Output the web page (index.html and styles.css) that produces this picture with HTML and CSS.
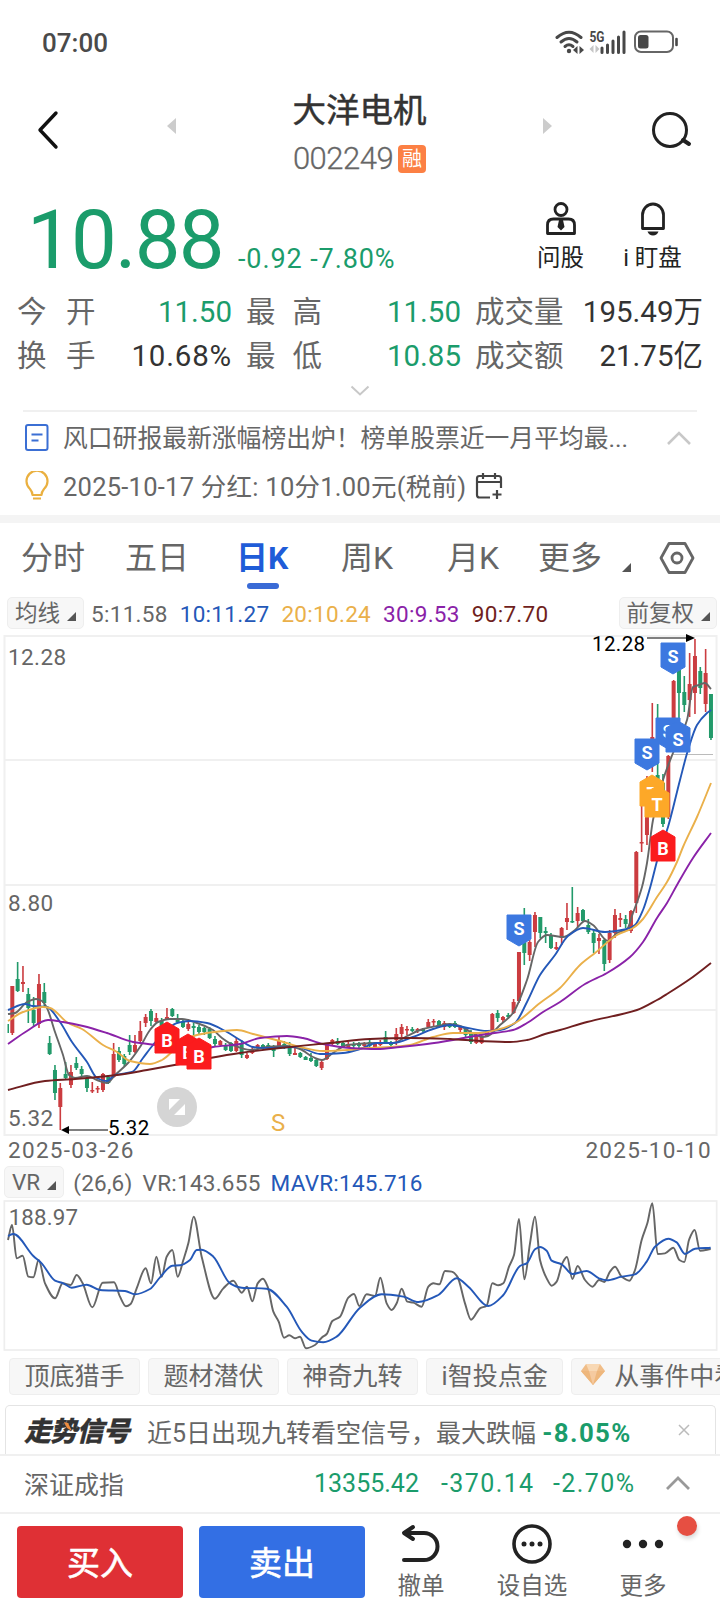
FILE: index.html
```html
<!DOCTYPE html>
<html lang="zh-CN">
<head>
    <meta charset="UTF-8">
    <meta name="viewport" content="width=device-width, initial-scale=1.0">
    <title>大洋电机 002249</title>
    <link rel="stylesheet" href="styles.css">
</head>
<body>
    <div class="status-bar">
        <span class="clock">07:00</span>
        <svg class="status-icons" width="126" height="26" viewBox="0 0 126 26">
            <g fill="none" stroke="#484848" stroke-width="3" stroke-linecap="round">
                <path d="M2 8.500Q14 -2 26 8.500"/>
                <path d="M6 13Q14 6 22 13"/>
                <path d="M10 17.500Q14 14 18 17.500"/>
            </g>
            <circle cx="14" cy="22" r="2.200" fill="#484848"/>
            <path d="M22.500 17v8l-4.500-4zM24.500 17v8l4.500-4z" fill="#484848"/>
            <text x="34.500" y="12.500" class="net" textLength="15" lengthAdjust="spacingAndGlyphs">5G</text>
            <path d="M38.500 16v8l-4-4zM40.500 16v8l4-4z" fill="#c4c4c4"/>
            <path d="M47 19v4.500M52.500 16v7.500M58 12v11.500M63.500 8v15.500M69 3v20.500" stroke="#484848" stroke-width="3" stroke-linecap="round"/>
            <rect x="80" y="2.500" width="38" height="20.500" rx="6" fill="none" stroke="#666" stroke-width="2"/>
            <rect x="83" y="6" width="10.500" height="13.500" rx="2.500" fill="#484848"/>
            <path d="M121.500 10v6" stroke="#484848" stroke-width="2.600" stroke-linecap="round"/>
        </svg>
    </div>

    <header class="header">
        <svg class="back" width="24" height="40" viewBox="0 0 24 40"><path d="M20 3L4 20L20 37" fill="none" stroke="#111" stroke-width="3.400" stroke-linecap="round" stroke-linejoin="round"/></svg>
        <svg class="prev" width="10" height="16" viewBox="0 0 10 16"><path d="M9 0v16L0 8z" fill="#ccc"/></svg>
        <div class="stock">
            <h1>大洋电机</h1>
            <p><span class="code">002249</span><span class="tag">融</span></p>
        </div>
        <svg class="next" width="10" height="16" viewBox="0 0 10 16"><path d="M1 0v16l9-8z" fill="#ccc"/></svg>
        <svg class="search" width="42" height="40" viewBox="0 0 42 40"><circle cx="19" cy="20" r="16.500" fill="none" stroke="#222" stroke-width="3"/><path d="M32 30l6 4" stroke="#222" stroke-width="4" stroke-linecap="round"/></svg>
    </header>

    <section class="quote">
        <span class="price">10.88</span>
        <span class="change">-0.92 -7.80%</span>
        <div class="tool">
            <svg width="32" height="34" viewBox="0 0 32 34"><g fill="none" stroke="#222" stroke-width="2.800"><circle cx="16" cy="7.500" r="6"/><path d="M2.500 23q0-6 6-6h15q6 0 6 6v8.500h-27z" stroke-linejoin="round"/></g><path d="M14 18h4l1.500 7-3.500 3.500-3.500-3.500z" fill="#222"/></svg>
            <span>问股</span>
        </div>
        <div class="tool">
            <svg width="32" height="34" viewBox="0 0 32 34"><path d="M5.500 26.500V13a10.500 11 0 0 1 21 0v13.500z" fill="none" stroke="#222" stroke-width="2.800" stroke-linejoin="round"/><path d="M10.500 29.500h11q-1.500 4-5.500 4t-5.500-4z" fill="#222"/></svg>
            <span>i 盯盘</span>
        </div>
    </section>

    <section class="stats">
        <span class="spread a">今开</span><b class="down">11.50</b><span class="spread">最高</span><b class="down">11.50</b><span>成交量</span><b>195.49万</b>
        <span class="spread a">换手</span><b class="turnover">10.68%</b><span class="spread">最低</span><b class="down">10.85</b><span>成交额</span><b>21.75亿</b>
    </section>
    <svg class="expand" width="20" height="12" viewBox="0 0 20 12"><path d="M1.500 1.500l8.500 8 8.500-8" fill="none" stroke="#c8c8c8" stroke-width="2"/></svg>

    <section class="news">
        <div class="news-row">
            <svg width="26" height="30" viewBox="0 0 26 30"><rect x="2" y="2" width="21.500" height="25" rx="2" fill="none" stroke="#3b6fd4" stroke-width="2"/><path d="M7.500 11.500h11M7.500 17.500h7" stroke="#3b6fd4" stroke-width="2"/></svg>
            <span>风口研报最新涨幅榜出炉！榜单股票近一月平均最...</span>
            <svg class="up" width="26" height="16" viewBox="0 0 26 16"><path d="M2 14L13 3l11 11" fill="none" stroke="#c8c8c8" stroke-width="2.600"/></svg>
        </div>
        <div class="news-row">
            <svg width="26" height="30" viewBox="0 0 26 30"><path d="M8.500 24q0-3-2.500-6A10.500 10.500 0 1 1 20 18q-2.500 3-2.500 6zM9 27.500h8" fill="none" stroke="#eab040" stroke-width="2.200" stroke-linejoin="round"/></svg>
            <span class="dividend">2025-10-17 分红: 10分1.00元(税前)</span>
            <svg class="cal" width="28" height="28" viewBox="0 0 28 28"><path d="M15 25.500H4.500q-2.500 0-2.500-2.500V6.500Q2 4 4.500 4h19Q26 4 26 6.500V16M2 10h24M8 1v6M20 1v6M22 18v9M17.500 22.500h9" fill="none" stroke="#444" stroke-width="2.200"/></svg>
        </div>
    </section>

    <nav class="tabs">
        <span>分时</span><span>五日</span><span class="active">日K</span><span>周K</span><span>月K</span><span class="more">更多</span>
        <svg class="gear" width="36" height="34" viewBox="0 0 36 34"><path d="M10 2.500h16L34 17l-8 14.500H10L2 17z" fill="none" stroke="#666" stroke-width="2.800" stroke-linejoin="round"/><circle cx="18" cy="17" r="5" fill="none" stroke="#666" stroke-width="2.800"/></svg>
    </nav>

    <div class="legend ma">
        <span class="select">均线</span>
        <span>5:11.58</span><span class="c10">10:11.27</span><span class="c20">20:10.24</span><span class="c30">30:9.53</span><span class="c90">90:7.70</span>
        <span class="select right">前复权</span>
    </div>

    <svg id="kline" class="kline" width="720" height="504" viewBox="0 634 720 504">
        <g stroke="#f0f0f0" stroke-width="2" fill="none">
            <rect x="4.500" y="636" width="712" height="499"/>
            <path d="M5 760H716M5 885H716M5 1010H716"/>
        </g>
        <path d="M672 754.500H713" stroke="#bbb"/>
        <g id="candles"></g>
        <g id="averages" fill="none" stroke-width="1.900"></g>
        <g class="axis">
            <text x="8" y="665">12.28</text>
            <text x="8" y="911">8.80</text>
            <text x="8" y="1126">5.32</text>
        </g>
        <g class="extreme">
            <text x="592" y="651">12.28</text>
            <text x="108" y="1135">5.32</text>
            <path d="M647 638H688M68 1130H108" stroke="#555" stroke-width="1.500"/>
            <path d="M695 638l-9-4v8zM61 1130l8-4v8z"/>
        </g>
        <circle cx="177" cy="1107" r="20" fill="#d5d5d5"/>
        <path d="M169 1099h11l-11 11zM185 1104v11h-11z" fill="#fff"/>
        <text x="271" y="1131" class="split">S</text>
        <g id="marks" class="marks"></g>
    </svg>
    <div class="dates"><span>2025-03-26</span><span>2025-10-10</span></div>

    <div class="legend vr-legend">
        <span class="select">VR</span>
        <span>(26,6)</span><span>VR:143.655</span><span class="c10">MAVR:145.716</span>
    </div>
    <svg class="vr" width="720" height="152" viewBox="0 120 2160 456">
        <rect x="13" y="123" width="2137" height="447" fill="none" stroke="#eee" stroke-width="5"/>
        <text x="26" y="194">188.97</text>
        <g id="vr" fill="none" stroke-width="5.800"></g>
    </svg>

    <div class="chips">
        <span>顶底猎手</span><span>题材潜伏</span><span>神奇九转</span><span>i智投点金</span>
        <span class="gem"><svg width="24" height="22" viewBox="0 0 24 22"><path d="M5 0h14l5 7-12 14L0 7z" fill="#f0bd88"/><path d="M5 0h14l-3 7H8z" fill="#f8d8b4"/><path d="M0 7h24L12 21z" fill="#eeb77d"/><path d="M8 7h8l-4 14z" fill="#f5caa0"/></svg>从事件中看</span>
    </div>

    <div class="signal">
        <strong>走势信号<svg class="spark" width="8" height="9" viewBox="0 0 8 9"><path d="M0 0l4 1 4 8-5-3z" fill="#f08c3c"/></svg></strong>
        <span>近5日出现九转看空信号，最大跌幅 <b>-8.05%</b></span>
        <svg class="close" width="12" height="12" viewBox="0 0 12 12"><path d="M1 1l10 10M11 1L1 11" stroke="#bbb" stroke-width="1.500"/></svg>
    </div>

    <div class="index-row">
        <span class="name">深证成指</span>
        <span class="v1">13355.42</span><span class="v2">-370.14</span><span class="v3">-2.70%</span>
        <svg width="26" height="16" viewBox="0 0 26 16"><path d="M2 14L13 3l11 11" fill="none" stroke="#999" stroke-width="2.800"/></svg>
    </div>

    <footer class="actions">
        <button class="buy">买入</button>
        <button class="sell">卖出</button>
        <div class="action">
            <svg width="42" height="42" viewBox="0 0 42 42"><path d="M13 4L4 10l9 6M4 10h20a13.500 13.500 0 0 1 0 27H4" fill="none" stroke="#222" stroke-width="4" stroke-linecap="round" stroke-linejoin="round"/></svg>
            <span>撤单</span>
        </div>
        <div class="action wide">
            <svg width="42" height="42" viewBox="0 0 42 42"><circle cx="21" cy="21" r="18" fill="none" stroke="#222" stroke-width="3.600"/><g fill="#222"><circle cx="13" cy="21" r="2.500"/><circle cx="21" cy="21" r="2.500"/><circle cx="29" cy="21" r="2.500"/></g></svg>
            <span>设自选</span>
        </div>
        <div class="action last">
            <svg width="42" height="42" viewBox="0 0 42 42"><g fill="#222"><circle cx="5" cy="21" r="4.200"/><circle cx="21" cy="21" r="4.200"/><circle cx="37" cy="21" r="4.200"/></g></svg>
            <span>更多</span>
            <i class="dot"></i>
        </div>
    </footer>

    <script src="chart.js"></script>
</body>
</html>
```
FILE: styles.css
```css
* {
    box-sizing: border-box;
}
body {
    margin: 0;
    width: 720px;
    height: 1610px;
    overflow: hidden;
    background: #fff;
    color: #666;
    font-family: Roboto, "Noto Sans CJK SC", sans-serif;
}
svg {
    display: block;
    flex: none;
}
.status-bar {
    height: 84px;
    padding: 0 39px 0 42px;
    display: flex;
    align-items: center;
    justify-content: space-between;
}
.clock {
    margin-top: 2px;
    font-size: 26px;
    font-weight: 500;
    color: #4a4a4a;
}
.net {
    font-size: 14px;
    font-weight: 700;
    fill: #484848;
}
.header {
    height: 100px;
    display: flex;
    align-items: center;
    padding: 0 27px 0 36px;
}
.back {
    margin-top: -8px;
}
.prev {
    margin: -16px 0 0 107px;
}
.next {
    margin: -16px 0 0 0;
}
.stock {
    flex: 1;
    text-align: center;
}
.search {
    margin: -8px 0 0 99px;
}
.stock h1 {
    margin: -2px 0 0;
    font-size: 33.5px;
    line-height: 50px;
    font-weight: 400;
    -webkit-text-stroke: 0.5px #333;
    color: #333;
}
.stock p {
    margin: 2px 0 0;
    height: 42px;
    display: flex;
    align-items: center;
    justify-content: center;
    gap: 5px;
}
.code {
    font-size: 31px;
    letter-spacing: -0.5px;
    font-weight: 300;
    -webkit-text-stroke: 0.3px #666;
    line-height: 42px;
}
.tag {
    width: 28px;
    height: 28px;
    border-radius: 4px;
    background: #fc8044;
    color: #fff;
    font-size: 20px;
    line-height: 28px;
    text-align: center;
}
.quote {
    height: 106px;
    padding-left: 27px;
    display: flex;
    align-items: flex-start;
    color: #1b9c6b;
}
.price {
    width: 211px;
    font-size: 81.5px;
    letter-spacing: -1.8px;
    line-height: 112px;
    white-space: nowrap;
}
.change {
    width: 281px;
    padding-top: 58px;
    font-size: 27px;
    line-height: 34px;
    letter-spacing: 0.9px;
}
.tool {
    width: 83px;
    padding-top: 18px;
    display: flex;
    flex-direction: column;
    align-items: center;
    color: #222;
    font-size: 23.5px;
    line-height: 36px;
    gap: 4px;
    white-space: nowrap;
}
.tool + .tool {
    width: 101px;
}
.stats {
    height: 90px;
    padding: 0 17px;
    display: grid;
    grid-template-columns: 80px 135px 94px 135px 104px 1fr;
    grid-auto-rows: 44px;
    font-size: 29.5px;
    line-height: 44px;
    white-space: nowrap;
}
.stats span {
    padding-left: 14px;
}
.stats .spread {
    letter-spacing: 17px;
}
.stats .a {
    padding-left: 0;
    letter-spacing: 19.5px;
}
.stats b {
    font-weight: 400;
    color: #333;
    text-align: right;
}
.stats .down {
    color: #1b9c6b;
}
.stats .turnover {
    letter-spacing: 0.8px;
}
.expand {
    margin: 5px auto 0;
}
.news {
    margin: 13px 23px 0;
    height: 105px;
    border-top: 2px solid #f0f0f0;
    padding-top: 3px;
}
.news-row {
    height: 48px;
    display: flex;
    align-items: center;
    font-size: 24.8px;
    gap: 13px;
    padding: 0 5px 0 1px;
    white-space: nowrap;
}
.news-row > svg:first-child {
    margin-top: -2px;
}
.news-row span {
    margin-top: -6px;
}
.news-row .up {
    margin: -3px 0 0 auto;
}
.news-row .dividend {
    font-size: 25.5px;
    letter-spacing: 0.25px;
}
.cal {
    margin: -3px 0 0 -4px;
}
.tabs {
    border-top: 8px solid #f4f4f4;
    height: 80px;
    padding-left: 21px;
    display: grid;
    grid-template-columns: 104px 111px 105px 106px 91px 120px 1fr;
    font-size: 32px;
    line-height: 70px;
}
.tabs span {
    position: relative;
}
.tabs .active {
    color: #1f5cd8;
    font-weight: 700;
}
.tabs .active::after {
    content: "";
    position: absolute;
    left: 11px;
    bottom: 6px;
    width: 32px;
    height: 6px;
    border-radius: 3px;
    background: #3a6bd6;
}
.gear {
    margin: 18px 0 0 1px;
}
.more::after,
.select::after {
    content: "";
    display: inline-block;
    border-left: 9px solid transparent;
    border-bottom: 9px solid #555;
    margin-left: 7px;
}
.tabs .more::after {
    margin: 0 0 -3px 20px;
}
.legend {
    height: 32px;
    display: flex;
    align-items: center;
    font-size: 22.5px;
    gap: 12px;
    letter-spacing: 0.3px;
    white-space: nowrap;
}
.ma {
    margin-top: 2px;
    padding: 0 3px 0 7px;
}
.legend span {
    padding-top: 1px;
}
.legend .select {
    height: 32px;
    line-height: 31px;
    padding: 0 7px;
    border: 1px solid #eee;
    border-radius: 5px;
    background: #f7f7f7;
    letter-spacing: 0;
    margin-right: -5px;
}
.legend .right {
    margin: 0 0 0 auto;
    padding: 0 6px;
}
.c10 {
    color: #2458b8;
}
.c20 {
    color: #eab04a;
}
.c30 {
    color: #8a22a8;
}
.c90 {
    color: #701f20;
}
.kline {
    margin-top: 5px;
}
.kline text,
.vr text {
    font-size: 22.5px;
    letter-spacing: 0.4px;
    fill: #666;
}
.kline .extreme text {
    font-size: 20.5px;
    fill: #000;
}
.kline .split {
    font-size: 24px;
    fill: #eab04a;
}
.kline .marks text {
    font-size: 18px;
    font-weight: 700;
    letter-spacing: 0;
    fill: #fff;
    text-anchor: middle;
}
.vr text {
    font-size: 67px;
    letter-spacing: 0.5px;
}
.dates {
    height: 28px;
    padding: 0 8px 4px;
    display: flex;
    justify-content: space-between;
    align-items: center;
    font-size: 22.5px;
    letter-spacing: 1.3px;
}
.vr-legend {
    padding-left: 4px;
    gap: 10px;
    letter-spacing: 0.25px;
}
.vr-legend .select {
    margin-right: -1px;
}
.vr {
    margin-top: 2px;
}
.chips {
    height: 43px;
    padding: 6px 0 0 9px;
    display: flex;
    gap: 8px;
    font-size: 25px;
    overflow: hidden;
}
.chips span {
    flex: none;
    height: 37px;
    line-height: 35px;
    padding: 0 14.5px;
    border: 1px solid #eee;
    border-radius: 4px;
    background: #f7f7f7;
}
.chips .gem {
    display: flex;
    align-items: center;
    gap: 9px;
    padding-left: 9px;
}
.chips .gem svg {
    margin-top: -4px;
}
.signal {
    height: 49px;
    margin: 10px 4px 0 5px;
    border: 1px solid #e4e4e4;
    border-bottom: 0;
    border-radius: 5px 5px 0 0;
    padding: 2px 25px 0 18px;
    display: flex;
    align-items: center;
    font-size: 25px;
    white-space: nowrap;
}
.signal strong {
    position: relative;
    width: 123px;
    margin-top: -3px;
    font-size: 27px;
    font-weight: 900;
    font-style: italic;
    letter-spacing: -0.7px;
    color: #333;
    -webkit-text-stroke: 0.3px #333;
}
.spark {
    position: absolute;
    left: 40px;
    top: 12px;
}
.signal b {
    font-size: 25.8px;
    letter-spacing: 1.4px;
    color: #1b9c6b;
}
.close {
    margin: -3px 0 0 auto;
}
.index-row {
    height: 60px;
    border-top: 2px solid #f0f0f0;
    border-bottom: 2px solid #f0f0f0;
    padding: 0 29px 2px 24px;
    display: flex;
    align-items: center;
    font-size: 25px;
    color: #1b9c6b;
}
.name {
    color: #666;
    width: 290px;
}
.v1 {
    width: 127px;
}
.v2 {
    width: 112px;
}
.v2,
.v3 {
    letter-spacing: 1.4px;
}
.index-row svg {
    margin-left: auto;
}
.actions {
    height: 96px;
    padding: 12px 0 0 17px;
    display: flex;
}
.actions button {
    width: 166px;
    height: 72px;
    margin-right: 16px;
    padding: 0 0 3px;
    border: 0;
    border-radius: 4px;
    color: #fff;
    font: 400 33px Roboto, "Noto Sans CJK SC", sans-serif;
    -webkit-text-stroke: 0.6px #fff;
}
.actions .buy {
    background: #df3035;
}
.actions .sell {
    background: #336fe4;
}
.action {
    position: relative;
    width: 82px;
    margin: -3px 0 0 -1px;
    display: flex;
    flex-direction: column;
    align-items: center;
    gap: 3px;
    font-size: 23.5px;
    line-height: 36px;
}
.action.wide {
    width: 140px;
    margin-left: 0;
}
.action.last {
    margin-left: 0;
}
.dot {
    position: absolute;
    right: -13px;
    top: -7px;
    width: 20px;
    height: 20px;
    border-radius: 50%;
    background: #e64f42;
    box-shadow: 1px 3px 4px rgba(0, 0, 0, 0.15);
}
```
FILE: chart.js
```js
const NS = 'http://www.w3.org/2000/svg';

function add(parent, tag, attrs, text) {
    const el = document.createElementNS(NS, tag);
    for (const key in attrs) el.setAttribute(key, attrs[key]);
    if (text) el.textContent = text;
    document.getElementById(parent).appendChild(el);
}

// smooth line through all points, without overshoot
function smooth(str) {
    const p = str.trim().split(/\s+/).map(s => s.split(',').map(Number));
    let d = `M${p[0]}`;
    for (let i = 0; i < p.length - 1; i++) {
        const a = p[i - 1] || p[i], b = p[i], c = p[i + 1], e = p[i + 2] || c;
        const h = (c[0] - b[0]) / 3;
        const s1 = slope(a, b, c), s2 = slope(b, c, e);
        d += `C${b[0] + h},${b[1] + h * s1} ${c[0] - h},${c[1] - h * s2} ${c}`;
    }
    return d;
}

function slope(a, b, c) {
    if (a === b || b === c) return a[0] === c[0] ? 0 : (c[1] - a[1]) / (c[0] - a[0]);
    const m = (b[1] - a[1]) / (b[0] - a[0]), n = (c[1] - b[1]) / (c[0] - b[0]);
    return m * n <= 0 ? 0 : 2 * m * n / (m + n);
}

// direction, high, body top, body bottom, low
const candles = `
r986,986,1033,1035 g962,979,991,992 r966,982,984,992 g988,994,1008,1023 g997,1010,1023,1027
r974,984,1024,1028 g983,992,1003,1008 g1036,1043,1054,1055 g1065,1070,1093,1100 r1083,1088,1107,1130
g1062,1074,1078,1080 r1065,1072,1085,1088 g1057,1063,1068,1070 g1066,1069,1074,1076 g1076,1078,1088,1092
r1082,1090,1091,1093 r1086,1088,1089,1093 r1073,1074,1090,1092 g1075,1077,1083,1084 r1043,1054,1077,1078
g1047,1051,1060,1062 g1054,1056,1064,1066 g1035,1045,1052,1055 r1035,1045,1052,1053 r1021,1031,1041,1043
r1014,1017,1023,1027 g1009,1011,1021,1026 r1013,1018,1022,1023 g1018,1021,1027,1028 r1008,1017,1019,1020
g1008,1009,1016,1017 g1014,1018,1022,1023 g1019,1022,1027,1028 r1019,1024,1029,1031 g1023,1026,1028,1037
g1025,1027,1032,1034 g1027,1028,1032,1035 g1027,1029,1038,1039 g1036,1039,1044,1046 r1040,1041,1045,1047
g1043,1045,1050,1051 g1042,1043,1051,1052 r1038,1041,1051,1052 g1040,1043,1055,1058 r1053,1055,1058,1059
r1047,1050,1053,1054 r1044,1045,1048,1050 g1044,1045,1048,1049 g1043,1045,1048,1049 g1045,1047,1051,1057
r1036,1041,1046,1047 g1041,1044,1047,1049 g1042,1047,1054,1056 r1048,1053,1055,1055 g1052,1053,1057,1058
g1056,1057,1060,1060 g1053,1058,1061,1062 g1058,1060,1066,1067 r1060,1062,1068,1070 r1043,1045,1059,1060
r1039,1040,1044,1045 g1038,1041,1044,1045 g1041,1043,1047,1048 r1042,1044,1047,1048 g1042,1044,1046,1048
g1042,1044,1046,1048 r1042,1044,1046,1048 g1040,1042,1046,1047 r1042,1044,1047,1049 r1040,1042,1045,1046
g1031,1037,1043,1044 g1041,1043,1045,1047 r1028,1034,1040,1045 r1024,1027,1034,1037 r1026,1029,1030,1035
g1027,1029,1031,1032 r1028,1029,1031,1033 g1028,1029,1031,1032 r1019,1022,1027,1028 r1019,1021,1022,1027
g1020,1021,1027,1028 r1021,1023,1027,1030 g1023,1024,1027,1028 g1021,1023,1027,1028 r1026,1027,1030,1032
g1027,1029,1035,1037 g1030,1034,1042,1044 r1034,1036,1043,1044 r1034,1037,1043,1044 r1030,1031,1036,1037
r1013,1014,1030,1030 g1010,1013,1018,1022 r1016,1017,1020,1023 g1013,1015,1017,1019 r999,1002,1013,1014
r952,952,1001,1003 g908,940,953,965 r940,942,955,961 r912,915,932,947 g917,917,933,938
g927,931,933,943 g933,936,948,949 r942,947,949,950 r927,928,938,945 r903,918,922,930
g887,921,922,923 r907,913,921,927 g909,910,921,922 g919,925,932,934 g930,933,943,953
r934,938,941,954 g938,940,964,971 r930,933,960,963 r909,915,933,938 r913,918,920,927
g915,919,924,928 r910,911,931,933 r851,852,903,913 r797,842,843,852 r776,800,835,845
r703,737,739,772 g704,775,779,790 g774,783,824,827 r755,756,817,819 r680,681,720,725
g670,670,693,720 g676,692,705,712 r653,684,700,717 r639,656,693,714 g667,671,688,694
r649,673,704,712 g694,694,738,740`;

candles.trim().split(/\s+/).forEach((c, i) => {
    const [hi, top, bottom, lo] = c.slice(1).split(',').map(Number);
    const x = 12.3 + i * 16 / 3;
    const fill = c[0] === 'r' ? '#cb3c40' : '#229a6a';
    add('candles', 'rect', { x: x - 0.8, y: hi, width: 1.6, height: lo - hi, fill });
    add('candles', 'rect', { x: x - 2, y: top, width: 4, height: Math.max(bottom - top, 1.5), fill });
});
add('candles', 'rect', { x: 7.5, y: 1024, width: 1.5, height: 9, fill: '#229a6a' });

const averages = [
    ['#666', '8,1014 15,1013 27,1002 36,999 42,1001 47,1008 55,1032 63,1055 69,1075 75,1078 87,1076 97,1080 107,1083 115,1075 128,1063 140,1047 150,1030 158,1022 170,1019 182,1019 197,1023 213,1030 222,1038 233,1045 250,1050 267,1047 287,1046 300,1049 313,1057 322,1060 333,1053 347,1045 377,1043 393,1043 407,1036 423,1029 437,1026 450,1024 460,1026 474,1034 482,1037 488,1036 500,1025 513,1013 527,980 538,942 547,935 563,937 575,930 585,921 593,925 608,941 617,933 627,929 633,913 642,887 647,863 653,820 663,780 673,753 687,720 693,687 699,685 705,683 711,689'],
    ['#2458b8', '8,1010 25,1004 33,1006 47,1007 60,1022 72,1042 87,1062 97,1078 107,1081 115,1075 132,1072 143,1058 153,1045 167,1030 177,1023 190,1021 207,1023 227,1032 240,1040 253,1047 270,1048 297,1047 320,1054 343,1053 360,1049 377,1043 393,1043 413,1037 433,1029 450,1025 463,1027 487,1031 500,1030 515,1023 527,1002 540,975 555,955 568,936 583,928 605,932 627,929 635,925 643,910 650,888 660,850 668,827 680,780 688,750 697,725 707,713 711,710'],
    ['#eab04a', '8,1021 23,1012 43,1007 50,1008 68,1023 82,1029 103,1045 117,1052 130,1061 150,1064 162,1060 177,1047 190,1037 207,1033 237,1030 253,1034 280,1041 300,1047 323,1051 347,1050 367,1048 390,1047 410,1045 433,1037 453,1033 480,1033 500,1029 515,1023 540,1003 560,988 580,965 595,953 617,935 633,928 643,919 657,897 667,882 677,862 683,847 697,817 711,783'],
    ['#8a22a8', '8,1044 27,1031 48,1020 63,1022 83,1026 107,1033 133,1042 157,1045 200,1050 213,1047 240,1044 260,1038 287,1036 303,1038 323,1044 350,1048 377,1049 400,1047 427,1044 453,1040 480,1035 513,1030 527,1023 543,1012 560,1002 585,984 607,973 630,957 643,942 657,918 667,903 677,885 693,858 711,833'],
    ['#701f20', '8,1090 45,1081 75,1079 117,1075 147,1070 180,1064 210,1058 240,1053 280,1048 330,1043 370,1039 410,1038 450,1039 480,1041 510,1042 527,1040 545,1034 560,1030 587,1022 637,1010 657,1000 667,994 690,979 711,963']
];
averages.forEach(([stroke, pts]) => add('averages', 'path', { d: smooth(pts), stroke }));

// trade marks: letter, x, y, pointing up, colour
const marks = [
    ['S', 507, 915, false, '#3c78e0'],
    ['S', 661, 643, false, '#3c78e0'],
    ['S', 656, 718, false, '#3c78e0'],
    ['S', 666, 721, true, '#3c78e0'],
    ['S', 635, 739, false, '#3c78e0'],
    ['T', 640, 775, true, '#fda828'],
    ['T', 645, 786, true, '#fda828'],
    ['B', 651, 830, true, '#fb1b1d'],
    ['B', 155, 1022, true, '#fb1b1d'],
    ['B', 176, 1034, true, '#fb1b1d'],
    ['B', 187, 1038, true, '#fb1b1d']
];
marks.forEach(([letter, x, y, up, fill]) => {
    const d = up ? `M${x},${y + 7}L${x + 12},${y}L${x + 24},${y + 7}V${y + 31}H${x}Z`
        : `M${x},${y}H${x + 24}V${y + 24}L${x + 12},${y + 31}L${x},${y + 24}Z`;
    add('marks', 'path', { d, fill, stroke: fill, 'stroke-linejoin': 'round' });
    add('marks', 'text', { x: x + 12, y: y + (up ? 25 : 20) }, letter);
});

add('vr', 'path', { stroke: '#666', d: smooth('24,240 36,195 50,295 68,287 85,350 100,352 116,300 135,370 165,415 188,370 212,375 230,345 248,370 277,442 308,368 342,367 360,410 378,439 392,432 410,385 437,325 453,370 469,290 485,350 500,290 517,270 533,350 550,300 565,250 581,170 605,290 645,416 670,385 700,362 725,398 741,380 757,424 773,370 789,356 803,380 820,455 836,485 852,533 868,526 885,535 900,530 918,565 945,555 965,533 980,522 997,483 1020,470 1045,413 1062,402 1078,438 1100,403 1125,408 1141,353 1160,430 1175,450 1190,430 1205,386 1222,425 1240,428 1265,440 1285,380 1300,370 1318,373 1335,333 1355,335 1372,350 1395,430 1413,479 1440,445 1460,437 1477,370 1495,376 1510,370 1527,320 1542,285 1557,177 1573,358 1590,250 1605,170 1620,300 1640,355 1655,377 1670,365 1687,310 1701,291 1717,357 1733,318 1755,360 1778,380 1797,360 1813,366 1830,335 1845,320 1865,350 1888,362 1905,330 1925,240 1942,190 1957,130 1973,282 1995,280 2020,263 2038,300 2053,306 2067,240 2084,210 2100,272 2132,267') });
add('vr', 'path', { stroke: '#2458b8', d: smooth('24,228 40,222 100,288 125,310 165,362 190,370 215,383 260,374 300,390 375,393 405,403 450,387 480,352 517,317 540,316 570,300 590,270 605,269 640,290 690,370 725,383 800,386 860,440 905,515 935,542 970,547 1010,530 1080,443 1145,403 1210,410 1255,426 1315,405 1370,355 1405,380 1465,438 1510,405 1560,318 1580,310 1605,268 1620,261 1640,272 1655,302 1685,313 1717,342 1760,333 1797,355 1820,361 1865,350 1905,343 1940,305 1965,260 2005,236 2030,247 2055,282 2085,266 2132,263') });
```
